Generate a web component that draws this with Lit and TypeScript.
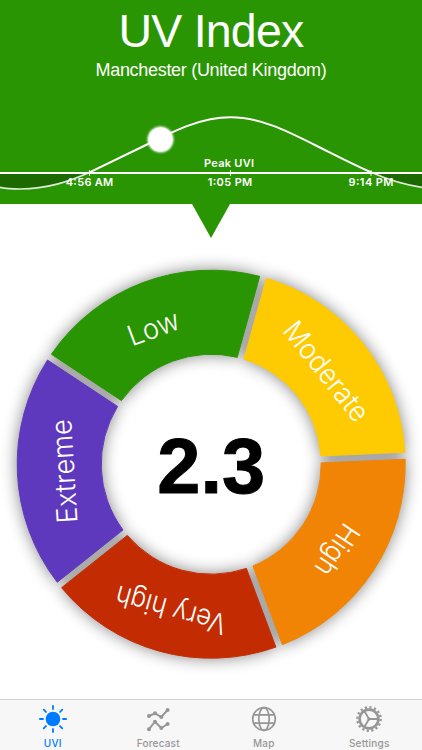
import { LitElement, html, svg, css } from "lit";
import { customElement, property } from "lit/decorators.js";
import { classMap } from "lit/directives/class-map.js";

interface Level {
  name: string;
  color: string;
  width: number;
  shift: number;
  baseline: number;
  tilt: number;
}

const LEVELS: Level[] = [
  { name: "Low", color: "#299502", width: 53, shift: -6.5, baseline: 138, tilt: 0 },
  { name: "Moderate", color: "#feca02", width: 119, shift: -1, baseline: 138, tilt: 0 },
  { name: "High", color: "#f18404", width: 56, shift: 2, baseline: 142.5, tilt: 0 },
  { name: "Very high", color: "#c32c02", width: 114, shift: 0, baseline: 141.3, tilt: 0 },
  { name: "Extreme", color: "#5f39bd", width: 104, shift: 2, baseline: 137, tilt: -1 },
];

const OUTER = 194;
const INNER = 110;
const HALF_GAP = 3.5;
const FIRST_EDGE = -56.5;

const rad = (deg: number) => (deg * Math.PI) / 180;

/* Point at radius r, pushed sideways from the radial line at deg. */
function edgePoint(r: number, deg: number, side: number): string {
  const a = rad(deg);
  const along = Math.sqrt(r * r - HALF_GAP * HALF_GAP);
  const x = Math.sin(a) * along + Math.cos(a) * side * HALF_GAP;
  const y = -Math.cos(a) * along + Math.sin(a) * side * HALF_GAP;
  return `${x.toFixed(2)} ${y.toFixed(2)}`;
}

function segmentPath(i: number): string {
  const a = FIRST_EDGE + i * 72;
  const b = a + 72;
  return (
    `M${edgePoint(OUTER, a, 1)}A${OUTER} ${OUTER} 0 0 1 ${edgePoint(OUTER, b, -1)}` +
    `L${edgePoint(INNER, b, -1)}A${INNER} ${INNER} 0 0 0 ${edgePoint(INNER, a, 1)}Z`
  );
}

@customElement("uv-curve")
export class UvCurve extends LitElement {
  static styles = css`
    :host { display: block; }
    svg { display: block; width: 100%; height: 104px; }
    .line { fill: none; stroke: #fff; stroke-width: 2; }
    .tick { fill: none; stroke: #fff; stroke-width: 0.9; }
    .night { fill: #1c6900; }
    .dim { fill: none; stroke: #fff; stroke-width: 1.7; opacity: 0.85; }
    .glow { fill: #fff; filter: blur(1.3px); }
    .dot { fill: #fff; }
    text { fill: #fff; font: 600 11px Inter, "Liberation Sans", sans-serif; text-anchor: middle; }
  `;
  render() {
    return html`<svg viewBox="0 100 422 104">
      <path class="night" d="M-2 173V187C4 188.4 12 189 20 189C48 189 70 181 90 173Z"></path>
      <path class="night" d="M371 173C391 181 408 186 424 187.6V173Z"></path>
      <path class="dim" d="M-2 187C4 188.4 12 189 20 189C48 189 70 181 90 172.3"></path>
      <path class="dim" d="M371 172.3C391 181 408 185.6 424 187.6"></path>
      <path class="line" d="M89 172.7L146 145C172 132 200 117.3 230.5 117.3C261 117.3 289 132 315 145C337 156 353 164.5 372 172.7"></path>
      <path class="line" d="M0 173H422"></path>
      <path class="tick" d="M89.5 170V176M230.5 170V176M371 170V176"></path>
      <circle class="glow" cx="160.5" cy="139.5" r="13"></circle>
      <circle class="dot" cx="160.5" cy="139.5" r="12"></circle>
      <text x="229" y="166.8" textLength="50">Peak UVI</text>
      <text x="89.5" y="186" textLength="47.5">4:56 AM</text>
      <text x="230" y="186" textLength="44.5">1:05 PM</text>
      <text x="371" y="186" textLength="45">9:14 PM</text>
    </svg>`;
  }
}

@customElement("uv-dial")
export class UvDial extends LitElement {
  @property() value = "";
  static styles = css`
    :host { display: block; }
    svg { display: block; width: 422px; height: 461px; }
    .ring { filter: drop-shadow(0 0 8px rgba(0, 0, 0, 0.48)); }
    .segment { stroke-width: 1; stroke-linejoin: round; }
    .label { fill: #fff; font: 300 28.5px Inter, Roboto, "Liberation Sans", sans-serif; text-anchor: middle; }
    .value { fill: #000; stroke: #000; stroke-width: 1; font: bold 77.5px "Liberation Sans", Arial, sans-serif; text-anchor: middle; }
  `;
  render() {
    return html`<svg viewBox="-211.2 -226.2 422 461">
      <g class="ring">
        ${LEVELS.map((l, i) => svg`<path class="segment" fill=${l.color} stroke=${l.color} d=${segmentPath(i)}></path>`)}
      </g>
      ${LEVELS.map(
        (l, i) => svg`<text class="label" x=${l.shift} y=${-l.baseline} textLength=${l.width}
          lengthAdjust="spacingAndGlyphs" transform="rotate(${FIRST_EDGE + 36 + i * 72 + l.tilt})">${l.name}</text>`
      )}
      <text class="value" x="0" y="29" textLength="108">${this.value}</text>
    </svg>`;
  }
}

const ICONS = {
  sun: svg`<circle cx="15" cy="15" r="7.3" fill="currentColor"></circle>
    <g stroke="currentColor" stroke-width="1.8" stroke-linecap="round">
      ${[0, 45, 90, 135, 180, 225, 270, 315].map((a) => svg`<path d="M15 5V1.9" transform="rotate(${a} 15 15)"></path>`)}
    </g>`,
  chart: svg`<g fill="none" stroke="currentColor" stroke-width="2">
      <path d="M6 12L12 9.3L18.3 13L24.6 6"></path><path d="M6 25.2L12 17.7L18.3 24L24.6 20"></path></g>
    <g fill="currentColor">${[[6, 12], [12, 9.3], [18.3, 13], [24.6, 6], [6, 25.2], [12, 17.7], [18.3, 24], [24.6, 20]].map(
      ([x, y]) => svg`<circle cx=${x} cy=${y} r="2"></circle>`
    )}</g>`,
  globe: svg`<g fill="none" stroke="currentColor" stroke-width="1.7">
      <circle cx="15" cy="15" r="11.3"></circle><ellipse cx="15" cy="15" rx="5.2" ry="11.3"></ellipse>
      <path d="M4.6 10.8H25.4M4.6 19.2H25.4"></path></g>`,
  gear: svg`<g fill="none" stroke="currentColor">
      <circle cx="15" cy="15" r="9.4" stroke-width="2.6"></circle>
      <circle cx="15" cy="15" r="11.7" stroke-width="2.4" stroke-dasharray="2.2 2.395"></circle>
      <path stroke-width="1.8" d="M16 15H24M15 15L10.2 6.7M15 15L10.2 23.3"></path>
      <circle cx="15" cy="15" r="1.2" fill="currentColor" stroke-width="1"></circle></g>`,
};

const TABS = [
  { label: "UVI", icon: ICONS.sun, active: true },
  { label: "Forecast", icon: ICONS.chart, active: false },
  { label: "Map", icon: ICONS.globe, active: false },
  { label: "Settings", icon: ICONS.gear, active: false },
];

@customElement("tab-bar")
export class TabBar extends LitElement {
  static styles = css`
    :host { display: grid; grid-template-columns: repeat(4, 1fr); height: 51px; box-sizing: border-box;
      background: #f7f7f7; border-top: 1px solid #d3d3d3; }
    .tab { display: flex; flex-direction: column; align-items: center; padding-top: 4px; color: #969696;
      font: 500 10px/12px Inter, "Liberation Sans", sans-serif; letter-spacing: 0.2px; }
    .active { color: #007aff; }
    svg { display: block; width: 30px; height: 30px; margin-bottom: 3px; flex: none; }
  `;
  render() {
    return TABS.map(
      (t) => html`<div class=${classMap({ tab: true, active: t.active })}>
        <svg viewBox="0 0 30 30">${t.icon}</svg><span>${t.label}</span>
      </div>`
    );
  }
}

@customElement("app-root")
export class AppRoot extends LitElement {
  static styles = css`
    :host { display: flex; flex-direction: column; height: 750px; overflow: hidden; background: #fff;
      font-family: "Liberation Sans", Arial, sans-serif; }
    header { flex: none; background: #299502; color: #fff; text-align: center; height: 204px; }
    h1 { margin: 0; padding-top: 5px; height: 52px; font-size: 46.5px; line-height: 52px; font-weight: 400;
      letter-spacing: -0.8px; }
    .place { height: 26px; margin-bottom: 17px; line-height: 26px; font-size: 18px; letter-spacing: -0.3px; }
    .pointer { flex: none; align-self: center; width: 38px; height: 34px; background: #299502;
      clip-path: polygon(0 0, 100% 0, 50% 100%); }
    uv-dial { flex: 1; min-height: 0; }
  `;
  render() {
    return html`
      <header>
        <h1>UV Index</h1>
        <div class="place">Manchester (United Kingdom)</div>
        <uv-curve></uv-curve>
      </header>
      <div class="pointer"></div>
      <uv-dial value="2.3"></uv-dial>
      <tab-bar></tab-bar>
    `;
  }
}
